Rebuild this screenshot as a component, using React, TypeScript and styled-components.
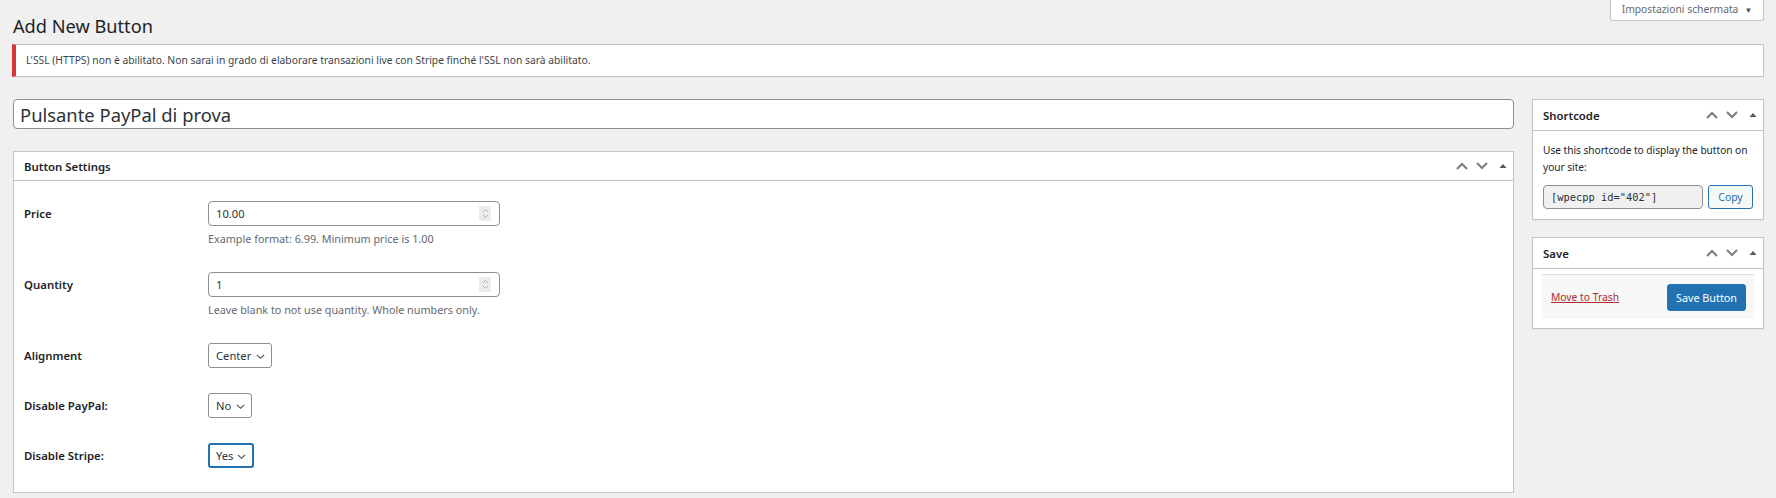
import React from "react";
import styled, { createGlobalStyle } from "styled-components";

const GlobalStyle = createGlobalStyle`
  body {
    margin: 0;
    background: #f0f0f1;
    font-family: "Noto Sans", "Open Sans", sans-serif;
    color: #1d2327;
  }
  * { box-sizing: border-box; }
`;

const Page = styled.div`
  padding: 0 12px 0 13px;
`;

const TopBar = styled.div`
  display: flex;
  justify-content: space-between;
  align-items: flex-start;
`;

const Title = styled.h1`
  margin: 13px 0 0;
  font-size: 18.2px;
  line-height: 26px;
  font-weight: 400;
  color: #1d2327;
`;

const ScreenTab = styled.button`
  height: 21px;
  width: 154px;
  margin: 0;
  border: 1px solid #c3c4c7;
  border-top: 0;
  border-radius: 0 0 3px 3px;
  background: #fff;
  color: #646970;
  font-family: inherit;
  font-size: 10.3px;
  display: flex;
  align-items: center;
  justify-content: center;
  gap: 6px;
  padding: 0 0 2px;

  span { font-size: 8px; color: #50575e; }
`;

const Notice = styled.div`
  margin: 5px 0 0 -1px;
  background: #fff;
  border: 1px solid #c3c4c7;
  border-left: 4px solid #d63638;
  box-shadow: 0 1px 1px rgba(0, 0, 0, 0.04);
  padding: 8px 10px;
  font-size: 10.3px;
  line-height: 15px;
  color: #3c434a;
`;

const Columns = styled.div`
  display: flex;
  gap: 18px;
  margin-top: 22px;
  align-items: flex-start;
`;

const Main = styled.div`
  flex: 1;
  display: flex;
  flex-direction: column;
  gap: 22px;
`;

const Sidebar = styled.div`
  width: 232px;
  display: flex;
  flex-direction: column;
  gap: 17px;
`;

const TitleInput = styled.input`
  height: 30px;
  width: 100%;
  border: 1px solid #8c8f94;
  border-radius: 4px;
  background: #fff;
  padding: 0 6px;
  font-family: inherit;
  font-size: 18.4px;
  color: #2c3338;
  outline: none;
`;

const Box = styled.div`
  background: #fff;
  border: 1px solid #c3c4c7;
  box-shadow: 0 1px 1px rgba(0, 0, 0, 0.04);
`;

const BoxHeader = styled.div<{ $h: number }>`
  height: ${(p) => p.$h}px;
  border-bottom: 1px solid #c3c4c7;
  display: flex;
  align-items: center;
  justify-content: space-between;
  padding: 0 6px 0 10px;
`;

const BoxTitle = styled.h2`
  margin: 0;
  font-size: 11.4px;
  font-weight: 600;
  color: #1d2327;
`;

const Handles = styled.div`
  display: flex;
  align-items: center;
  gap: 8px;
  color: #787c82;

  svg:last-child { margin-left: 3px; }
`;

const HandleIcons = () => (
  <Handles>
    <svg width="12" height="8" viewBox="0 0 12 8">
      <path d="M1 7 L6 2 L11 7" fill="none" stroke="currentColor" strokeWidth="2" />
    </svg>
    <svg width="12" height="8" viewBox="0 0 12 8">
      <path d="M1 1 L6 6 L11 1" fill="none" stroke="currentColor" strokeWidth="2" />
    </svg>
    <svg width="8" height="8" viewBox="0 0 8 8">
      <path d="M0.5 6 L4 2 L7.5 6 Z" fill="#50575e" />
    </svg>
  </Handles>
);

const SettingsBody = styled.div`
  padding: 8px 10px 11px;
`;

const Row = styled.div`
  display: flex;
  align-items: flex-start;
  padding: 12px 0 13px;
`;

const Label = styled.div`
  width: 184px;
  flex-shrink: 0;
  font-size: 11.4px;
  font-weight: 600;
  line-height: 25px;
  color: #1d2327;
`;

const Field = styled.div`
  display: flex;
  flex-direction: column;
`;

const NumberWrap = styled.div`
  position: relative;
  width: 292px;
`;

const NumberInput = styled.input`
  width: 100%;
  height: 25px;
  border: 1px solid #8c8f94;
  border-radius: 4px;
  padding: 0 7px;
  font-family: inherit;
  font-size: 11.2px;
  color: #2c3338;
  background: #fff;
  outline: none;
`;

const Spinner = styled.div`
  position: absolute;
  right: 9px;
  top: 5px;
  width: 12px;
  height: 15px;
  background: #ececec;
  display: flex;
  align-items: center;
  justify-content: center;
`;

const Desc = styled.p`
  margin: 4px 0 0;
  font-size: 10.8px;
  line-height: 17px;
  color: #646970;
`;

const SelectWrap = styled.div<{ $focus?: boolean }>`
  position: relative;
  display: inline-flex;
  align-items: center;
  height: 25px;
  padding: 0 ${(p) => (p.$focus ? 19 : 20)}px 0 ${(p) => (p.$focus ? 6 : 7)}px;
  border: ${(p) => (p.$focus ? "2px solid #2271b1" : "1px solid #8c8f94")};
  border-radius: 3px;
  background: #fff;
  font-size: 11.2px;
  color: #2c3338;

  svg {
    position: absolute;
    right: 6px;
    top: 50%;
    margin-top: -2px;
  }
`;

const Select = ({ value, focus }: { value: string; focus?: boolean }) => (
  <SelectWrap $focus={focus}>
    {value}
    <svg width="9" height="5" viewBox="0 0 9 5">
      <path d="M0.8 0.8 L4.5 4.2 L8.2 0.8" fill="none" stroke="#50575e" strokeWidth="1.1" />
    </svg>
  </SelectWrap>
);

const SideBody = styled.div`
  padding: 11px 10px 10px;
  font-size: 10.1px;
  line-height: 17px;
  color: #1d2327;
`;

const ShortcodeRow = styled.div`
  display: flex;
  gap: 5px;
  margin-top: 9px;
`;

const CodeField = styled.div`
  width: 160px;
  height: 24px;
  border: 1px solid #8c8f94;
  border-radius: 4px;
  background: #f0f0f1;
  font-family: "DejaVu Sans Mono", "Liberation Mono", monospace;
  font-size: 10.4px;
  display: flex;
  align-items: center;
  padding: 0 7px;
  color: #2c3338;
`;

const CopyButton = styled.button`
  width: 45px;
  height: 24px;
  border: 1px solid #2271b1;
  border-radius: 3px;
  background: #f6f7f7;
  color: #2271b1;
  font-family: inherit;
  font-size: 10.4px;
  padding: 0;
`;

const SaveBody = styled.div`
  padding: 5px 9px 9px;
`;

const Actions = styled.div`
  background: #f6f7f7;
  border-top: 1px solid #dcdcde;
  height: 45px;
  display: flex;
  align-items: center;
  justify-content: space-between;
  padding: 0 8px 0 9px;
`;

const TrashLink = styled.a`
  color: #b32d2e;
  font-size: 10.3px;
  text-decoration: underline;
  cursor: pointer;
`;

const PrimaryButton = styled.button`
  width: 79px;
  height: 27px;
  border: 1px solid #2271b1;
  border-radius: 3px;
  background: #2271b1;
  color: #fff;
  font-family: inherit;
  font-size: 10.8px;
  padding: 0;
`;

const SpinIcon = () => (
  <svg width="7" height="11" viewBox="0 0 7 11">
    <path d="M1 4 L3.5 1.5 L6 4 M1 7 L3.5 9.5 L6 7" fill="none" stroke="#a7aaad" strokeWidth="0.9" />
  </svg>
);

export default function App() {
  return (
    <Page>
      <GlobalStyle />
      <TopBar>
        <Title>Add New Button</Title>
        <ScreenTab>
          Impostazioni schermata <span>▼</span>
        </ScreenTab>
      </TopBar>
      <Notice>
        L'SSL (HTTPS) non è abilitato. Non sarai in grado di elaborare transazioni live con Stripe finché l'SSL non sarà abilitato.
      </Notice>
      <Columns>
        <Main>
          <TitleInput defaultValue="Pulsante PayPal di prova" />
          <Box>
            <BoxHeader $h={29}>
              <BoxTitle>Button Settings</BoxTitle>
              <HandleIcons />
            </BoxHeader>
            <SettingsBody>
              <Row>
                <Label>Price</Label>
                <Field>
                  <NumberWrap>
                    <NumberInput defaultValue="10.00" />
                    <Spinner>
                      <SpinIcon />
                    </Spinner>
                  </NumberWrap>
                  <Desc>Example format: 6.99. Minimum price is 1.00</Desc>
                </Field>
              </Row>
              <Row>
                <Label>Quantity</Label>
                <Field>
                  <NumberWrap>
                    <NumberInput defaultValue="1" />
                    <Spinner>
                      <SpinIcon />
                    </Spinner>
                  </NumberWrap>
                  <Desc>Leave blank to not use quantity. Whole numbers only.</Desc>
                </Field>
              </Row>
              <Row>
                <Label>Alignment</Label>
                <Select value="Center" />
              </Row>
              <Row>
                <Label>Disable PayPal:</Label>
                <Select value="No" />
              </Row>
              <Row>
                <Label>Disable Stripe:</Label>
                <Select value="Yes" focus />
              </Row>
            </SettingsBody>
          </Box>
        </Main>
        <Sidebar>
          <Box>
            <BoxHeader $h={31}>
              <BoxTitle>Shortcode</BoxTitle>
              <HandleIcons />
            </BoxHeader>
            <SideBody>
              Use this shortcode to display the button on your site:
              <ShortcodeRow>
                <CodeField>[wpecpp id="402"]</CodeField>
                <CopyButton>Copy</CopyButton>
              </ShortcodeRow>
            </SideBody>
          </Box>
          <Box>
            <BoxHeader $h={31}>
              <BoxTitle>Save</BoxTitle>
              <HandleIcons />
            </BoxHeader>
            <SaveBody>
              <Actions>
                <TrashLink>Move to Trash</TrashLink>
                <PrimaryButton>Save Button</PrimaryButton>
              </Actions>
            </SaveBody>
          </Box>
        </Sidebar>
      </Columns>
    </Page>
  );
}
